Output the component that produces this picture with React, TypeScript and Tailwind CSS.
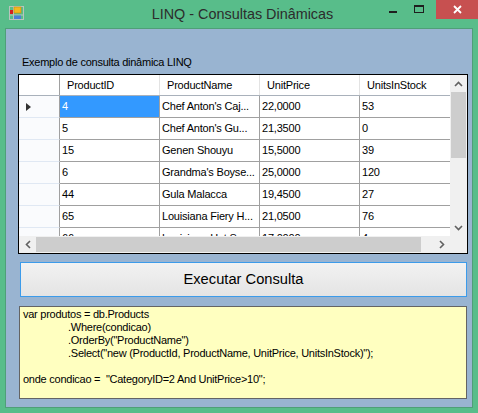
export default function App() {
  const rows = [
    { id: "4", name: "Chef Anton's Caj...", price: "22,0000", stock: "53" },
    { id: "5", name: "Chef Anton's Gu...", price: "21,3500", stock: "0" },
    { id: "15", name: "Genen Shouyu", price: "15,5000", stock: "39" },
    { id: "6", name: "Grandma's Boyse...", price: "25,0000", stock: "120" },
    { id: "44", name: "Gula Malacca", price: "19,4500", stock: "27" },
    { id: "65", name: "Louisiana Fiery H...", price: "21,0500", stock: "76" },
    { id: "66", name: "Louisiana Hot S...", price: "17,0000", stock: "4" },
  ];

  const font = { fontFamily: '"Liberation Sans", Arial, sans-serif' };

  return (
    <div className="w-[478px] h-[413px] bg-[#58bd8a] flex flex-col overflow-hidden" style={font}>
      {/* ===== TITLE BAR ===== */}
      <div className="h-[28px] flex items-start relative">
        <div className="w-[40px] h-[28px] flex items-start pl-[9px] pt-[6px]">
          <svg width="15" height="14" viewBox="0 0 15 14">
            <rect x="0.5" y="0.5" width="14" height="13" fill="none" stroke="#b9c4bd" />
            <line x1="0.5" y1="9" x2="14.5" y2="9" stroke="#b9c4bd" />
            <line x1="4.5" y1="0.5" x2="4.5" y2="13.5" stroke="#b9c4bd" />
            <rect x="1" y="4" width="3" height="4" fill="#d42020" />
            <rect x="5" y="1" width="7" height="6" fill="#f2b820" stroke="#c88a00" strokeWidth="0.6" />
            <rect x="5" y="9.5" width="7" height="3.5" fill="#4a7fd8" />
          </svg>
        </div>
        <div className="flex-1 text-center pt-[4px] pl-[65px] text-[14.4px] text-[#2c2c2c] whitespace-nowrap">
          LINQ - Consultas Dinâmicas
        </div>
        <div className="flex items-start">
          <div className="w-[26px] h-[19px] flex items-start justify-center pt-[11px]">
            <div className="w-[8px] h-[2px] bg-[#1e1e1e]" />
          </div>
          <div className="w-[26px] h-[19px] flex items-start justify-center pt-[5px] mr-[4px]">
            <div className="w-[10px] h-[8px] border border-t-2 border-[#1e1e1e]" />
          </div>
          <div className="w-[42px] h-[19px] bg-[#c75050] flex items-center justify-center">
            <svg width="9" height="9" viewBox="0 0 9 9">
              <path d="M1 1 L8 8 M8 1 L1 8" stroke="#fff" strokeWidth="1.8" />
            </svg>
          </div>
        </div>
      </div>

      {/* ===== CLIENT AREA ===== */}
      <div className="mx-[5px] h-[380px] border border-[#4f9f78] bg-[#99b4d1] flex flex-col">
        <div className="ml-[16px] mt-[27px] text-[11px] leading-[13px] tracking-[-0.25px] text-black">
          Exemplo de consulta dinâmica LINQ
        </div>

        {/* Grid */}
        <div className="ml-[12px] mt-[5px] w-[450px] h-[180px] border border-black bg-white flex flex-col">
          <div className="flex h-[161px]">
            <div className="w-[431px] h-[161px] overflow-hidden flex flex-col text-[11px] tracking-[-0.2px] text-black">
              <div className="flex h-[21px] shrink-0 border-b border-[#a9b1bb]">
                <div className="w-[41px] shrink-0 border-r border-[#a0a0a0] bg-white" />
                {["ProductID", "ProductName", "UnitPrice", "UnitsInStock"].map((h) => (
                  <div key={h} className="w-[100px] shrink-0 border-r border-[#e3e3e3] pl-[7px] flex items-center bg-white">
                    {h}
                  </div>
                ))}
              </div>
              {rows.map((r, i) => (
                <div key={r.id} className="flex h-[22px] shrink-0">
                  <div className="w-[41px] shrink-0 border-r border-r-[#a0a0a0] border-b border-b-[#e0e8f3] bg-[#fafbfd] flex items-center pl-[7px]">
                    {i === 0 && (
                      <svg width="6" height="8" viewBox="0 0 6 8">
                        <path d="M0 0 L5 4 L0 8 Z" fill="#333" />
                      </svg>
                    )}
                  </div>
                  <div
                    className={`w-[100px] shrink-0 border-r border-b border-[#a0a0a0] pl-[2px] flex items-center ${
                      i === 0 ? "bg-[#3399ff] text-white" : ""
                    }`}
                  >
                    {r.id}
                  </div>
                  <div className="w-[100px] shrink-0 border-r border-b border-[#a0a0a0] pl-[2px] flex items-center whitespace-nowrap">
                    {r.name}
                  </div>
                  <div className="w-[100px] shrink-0 border-r border-b border-[#a0a0a0] pl-[2px] flex items-center">
                    {r.price}
                  </div>
                  <div className="w-[100px] shrink-0 border-r border-b border-[#a0a0a0] pl-[2px] flex items-center">
                    {r.stock}
                  </div>
                </div>
              ))}
            </div>
            {/* Vertical scrollbar */}
            <div className="w-[17px] h-[161px] bg-[#f0f0f0] flex flex-col">
              <div className="h-[17px] flex items-center justify-center">
                <svg width="9" height="6" viewBox="0 0 9 6">
                  <path d="M1 5 L4.5 1.5 L8 5" fill="none" stroke="#606060" strokeWidth="1.6" />
                </svg>
              </div>
              <div className="mx-[1px] h-[66px] bg-[#cdcdcd]" />
              <div className="flex-1" />
              <div className="h-[17px] flex items-center justify-center">
                <svg width="9" height="6" viewBox="0 0 9 6">
                  <path d="M1 1 L4.5 4.5 L8 1" fill="none" stroke="#606060" strokeWidth="1.6" />
                </svg>
              </div>
            </div>
          </div>
          {/* Horizontal scrollbar */}
          <div className="flex h-[17px]">
            <div className="w-[431px] h-[17px] bg-[#f0f0f0] flex items-center">
              <div className="w-[17px] h-[17px] flex items-center justify-center">
                <svg width="6" height="9" viewBox="0 0 6 9">
                  <path d="M5 1 L1.5 4.5 L5 8" fill="none" stroke="#606060" strokeWidth="1.6" />
                </svg>
              </div>
              <div className="w-[385px] h-[15px] bg-[#cdcdcd]" />
              <div className="flex-1" />
              <div className="w-[17px] h-[17px] flex items-center justify-center">
                <svg width="6" height="9" viewBox="0 0 6 9">
                  <path d="M1 1 L4.5 4.5 L1 8" fill="none" stroke="#606060" strokeWidth="1.6" />
                </svg>
              </div>
            </div>
            <div className="w-[17px] h-[17px] bg-[#f0f0f0]" />
          </div>
        </div>

        {/* Button */}
        <button className="ml-[14px] mt-[8px] w-[447px] h-[35px] border border-[#3c9bea] bg-gradient-to-b from-[#f2f2f2] to-[#e4e4e4] text-[14.7px] text-black flex items-center justify-center pb-[1px]">
          Executar Consulta
        </button>

        {/* Code box */}
        <div className="ml-[13px] mt-[9px] w-[448px] h-[93px] border border-[#646464] bg-[#ffffc0] pl-[3px] pt-[1px] text-[11px] leading-[13px] tracking-[-0.25px] text-black whitespace-pre">
          <div>var produtos = db.Products</div>
          <div className="pl-[45px]">.Where(condicao)</div>
          <div className="pl-[45px]">.OrderBy("ProductName")</div>
          <div className="pl-[45px]">.Select("new (ProductId, ProductName, UnitPrice, UnitsInStock)");</div>
          <div className="h-[13px]" />
          <div>onde condicao =  "CategoryID=2 And UnitPrice&gt;10";</div>
        </div>
      </div>
    </div>
  );
}
